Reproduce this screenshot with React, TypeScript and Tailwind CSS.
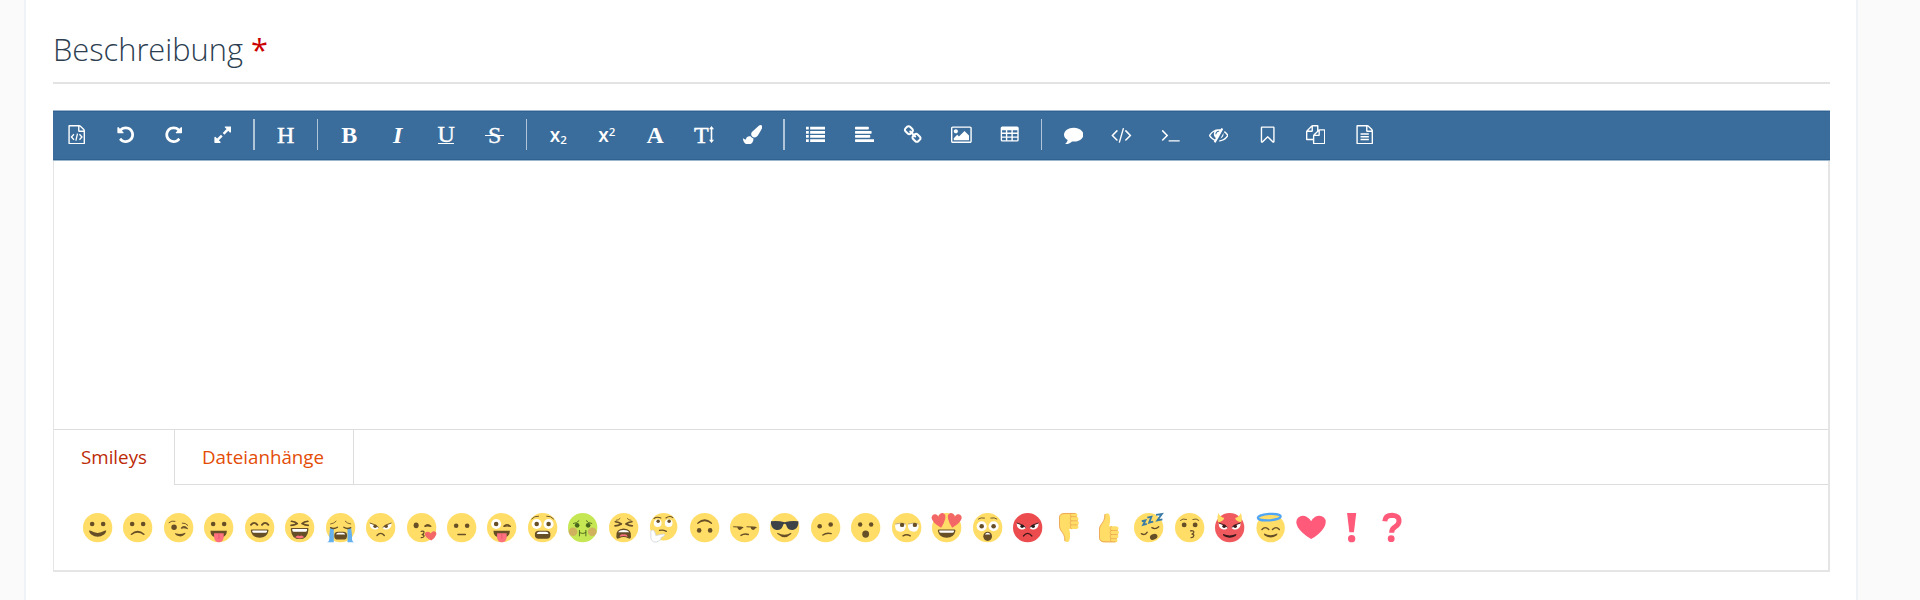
import type { ReactNode } from "react";

type IconProps = {
  d: string;
  viewBox?: string;
  className?: string;
};

// 1792 units = 1em of the toolbar icon font
const Icon = ({ d, viewBox = "0 0 1792 1792", className = "" }: IconProps) => (
  <svg viewBox={viewBox} fill="currentColor" className={`h-[19.4px] ${className}`}>
    <path d={d} />
  </svg>
);

const PAGE =
  "M1596 380q28 28 48 76t20 88v1152q0 40-28 68t-68 28h-1344q-40 0-68-28t-28-68v-1600q0-40 28-68t68-28h896q40 0 88 20t76 48zm-444-244v376h376q-10-29-22-41l-313-313q-12-12-41-22zm384 1528v-1024h-416q-40 0-68-28t-28-68v-416h-768v1536h1280z";
const UNDO =
  "M1664 896q0 156-61 298t-164 245-245 164-298 61q-172 0-327-72.5t-264-204.5q-7-10-6.5-22.5t8.5-20.5l137-138q10-9 25-9 16 2 23 12 73 95 179 147t225 52q104 0 198.5-40.5t163.5-109.5 109.5-163.5 40.5-198.5-40.5-198.5-109.5-163.5-163.5-109.5-198.5-40.5q-98 0-188 35.5t-160 101.5l137 138q31 30 14 69-17 40-59 40h-448q-26 0-45-19t-19-45v-448q0-42 40-59 39-17 69 14l130 129q107-101 244.5-156.5t284.5-55.5q156 0 298 61t245 164 164 245 61 298z";
const EXPAND =
  "M883 1056q0 13-10 23l-332 332 144 144q19 19 19 45t-19 45-45 19h-448q-26 0-45-19t-19-45v-448q0-26 19-45t45-19 45 19l144 144 332-332q10-10 23-10t23 10l114 114q10 10 10 23zm781-864v448q0 26-19 45t-45 19-45-19l-144-144-332 332q-10 10-23 10t-23-10l-114-114q-10-10-10-23t10-23l332-332-144-144q-19-19-19-45t19-45 45-19h448q26 0 45 19t19 45z";
const BRUSH =
  "M1615 0q70 0 122.5 46.5t52.5 116.5q0 63-45 151-332 629-465 752-97 91-218 91-126 0-216.5-92.5t-90.5-219.5q0-128 92-212l638-579q59-54 130-54zm-909 1034q39 76 106.5 130t150.5 76l1 71q4 213-129.5 347t-348.5 134q-123 0-218-46.5t-152.5-127.5-86.5-183-29-220q7 5 41 30t62 44.5 59 36.5 46 17q41 0 55-37 25-66 57.5-112.5t69.5-76 88-47.5 103-25.5 125-10.5z";
const LIST =
  "M0 160h256v256H0zM384 160h1408v256H384zM0 544h256v256H0zM384 544h1408v256H384zM0 928h256v256H0zM384 928h1408v256H384zM0 1312h256v256H0zM384 1312h1408v256H384z";
const ALIGN =
  "M64 160h1152q64 0 64 64v128q0 64-64 64H64q-64 0-64-64V224q0-64 64-64zM64 544h1408q64 0 64 64v128q0 64-64 64H64q-64 0-64-64V608q0-64 64-64zM64 928h1280q64 0 64 64v128q0 64-64 64H64q-64 0-64-64V992q0-64 64-64zM64 1312h1664q64 0 64 64v128q0 64-64 64H64q-64 0-64-64v-128q0-64 64-64z";
const LINK =
  "M1520 1216q0-40-28-68l-208-208q-28-28-68-28-42 0-72 32 3 3 19 18.5t21.5 21.5 15 19 13 25.5 3.5 27.5q0 40-28 68t-68 28q-15 0-27.5-3.5t-25.5-13-19-15-21.5-21.5-18.5-19q-33 31-33 73 0 40 28 68l206 207q27 27 68 27 40 0 68-26l147-146q28-28 28-67zm-703-705q0-40-28-68l-206-207q-28-28-68-28-39 0-68 27l-147 146q-28 28-28 67 0 40 28 68l208 208q27 27 68 27 42 0 72-31-3-3-19-18.5t-21.5-21.5-15-19-13-25.5-3.5-27.5q0-40 28-68t68-28q15 0 27.5 3.5t25.5 13 19 15 21.5 21.5 18.5 19q33-31 33-73zm895 705q0 120-85 203l-147 146q-83 83-203 83-121 0-204-85l-206-207q-83-83-83-203 0-123 88-209l-88-88q-86 88-208 88-120 0-204-84l-208-208q-84-84-84-204t85-203l147-146q83-83 203-83 121 0 204 85l206 207q83 83 83 203 0 123-88 209l88 88q86-88 208-88 120 0 204 84l208 208q84 84 84 204z";
const PICTURE =
  "M576 576q0 80-56 136t-136 56-136-56-56-136 56-136 136-56 136 56 56 136zm1024 384v448h-1408v-192l320-320 160 160 512-512zm96-704h-1600q-13 0-22.5 9.5t-9.5 22.5v1216q0 13 9.5 22.5t22.5 9.5h1600q13 0 22.5-9.5t9.5-22.5v-1216q0-13-9.5-22.5t-22.5-9.5zm160 32v1216q0 66-47 113t-113 47h-1600q-66 0-113-47t-47-113v-1216q0-66 47-113t113-47h1600q66 0 113 47t47 113z";
const TABLE =
  "M224 128h1344q160 0 160 160v1088q0 160-160 160H224q-160 0-160-160V288q0-160 160-160zM192 480v224h352V480zm480 0v224h384V480zm512 0v224h416V480zM192 832v224h352V832zm480 0v224h384V832zm512 0v224h416V832zM192 1184v224h352v-224zm480 0v224h384v-224zm512 0v224h416v-224z";
const COMMENT =
  "M1792 896q0 174-120 321.5t-326 233-450 85.5q-70 0-145-8-198 175-460 242-49 14-114 22-17 2-30.5-9t-17.5-29v-1q-3-4-.5-12t2-10 4.5-9.5l6-9 7-8.5 8-9q7-8 31-34.5t34.5-38 31-39.5 32.5-51 27-59 26-76q-157-89-247.5-220t-90.5-281q0-130 71-248.5t191-204.5 286-136.5 348-50.5q244 0 450 85.5t326 233 120 321.5z";
const CODE =
  "M681 1399l-50 50q-10 10-23 10t-23-10l-466-466q-10-10-10-23t10-23l466-466q10-10 23-10t23 10l50 50q10 10 10 23t-10 23l-393 393 393 393q10 10 10 23t-10 23zm591-1067l-373 1291q-4 13-15.5 19.5t-23.5 2.5l-62-17q-13-4-19.5-15.5t-2.5-24.5l373-1291q4-13 15.5-19.5t23.5-2.5l62 17q13 4 19.5 15.5t2.5 24.5zm657 651l-466 466q-10 10-23 10t-23-10l-50-50q-10-10-10-23t10-23l393-393-393-393q-10-10-10-23t10-23l50-50q10-10 23-10t23 10l466 466q10 10 10 23t-10 23z";
const TERMINAL =
  "M649 983l-466 466q-10 10-23 10t-23-10l-50-50q-10-10-10-23t10-23l393-393-393-393q-10-10-10-23t10-23l50-50q10-10 23-10t23 10l466 466q10 10 10 23t-10 23zm1079 457v64q0 14-9 23t-23 9h-960q-14 0-23-9t-9-23v-64q0-14 9-23t23-9h960q14 0 23 9t9 23z";
const EYE_SLASH =
  "M555 1335l78-141q-87-63-136-159t-49-203q0-121 61-225-229 117-381 353 167 258 427 375zm389-759q0-20-14-34t-34-14q-125 0-214.5 89.5t-89.5 214.5q0 20 14 34t34 14 34-14 14-34q0-86 61-147t147-61q20 0 34-14t14-34zm363-191q0 7-1 9-106 189-316 567t-315 566l-49 89q-10 16-28 16-12 0-134-70-16-10-16-28 0-12 44-87-143-65-263.5-173t-208.5-245q-20-31-20-69t20-69q153-235 380-371t496-136q89 0 180 17l54-97q10-16 28-16 5 0 18 6t31 15.5 33 18.5 31.5 18.5 19.5 11.5q16 10 16 27zm37 447q0 139-79 253.5t-209 164.5l280-502q8 45 8 84zm448 128q0 35-20 69-39 64-109 145-150 172-347.5 267t-419.5 95l74-132q212-18 392.5-137t301.5-307q-115-179-282-294l63-112q95 64 182.5 153t144.5 184q20 34 20 69z";
const BOOKMARK =
  "M1408 256h-1024v1242l423-406 89-85 89 85 423 406v-1242zm12-128q23 0 44 9 33 13 52.5 41t19.5 62v1289q0 34-19.5 62t-52.5 41q-19 8-44 8-48 0-83-32l-441-424-441 424q-36 33-83 33-23 0-44-9-33-13-52.5-41t-19.5-62v-1289q0-34 19.5-62t52.5-41q21-9 44-9h1048z";
const COPY =
  "M1696 384q40 0 68 28t28 68v1216q0 40-28 68t-68 28h-960q-40 0-68-28t-28-68v-288h-544q-40 0-68-28t-28-68v-672q0-40 20-88t48-76l408-408q28-28 76-48t88-20h416q40 0 68 28t28 68v328q68-40 128-40h416zm-544 213l-299 299h299v-299zm-640-384l-299 299h299v-299zm196 647l316-316v-416h-384v416q0 40-28 68t-68 28h-416v640h512v-256q0-40 20-88t48-76zm956 804v-1152h-384v416q0 40-28 68t-68 28h-416v640h896z";

const Letter = ({ children, className = "" }: { children: ReactNode; className?: string }) => (
  <span className={`font-['Liberation_Serif',serif] text-[24px] leading-none ${className}`}>{children}</span>
);

const toolbar: { title: string; icon: ReactNode }[][] = [
  [
    {
      title: "Quelltext",
      icon: (
        <svg viewBox="0 0 1792 1792" fill="currentColor" className="h-[19.4px]">
          <path d={PAGE} />
          <path
            d="M640 860L410 1110l230 250M1152 860l230 250-230 250M970 800L822 1440"
            fill="none"
            stroke="currentColor"
            strokeWidth="120"
          />
        </svg>
      ),
    },
    { title: "Rückgängig", icon: <Icon d={UNDO} /> },
    { title: "Wiederholen", icon: <Icon d={UNDO} className="-scale-x-100" /> },
    { title: "Vollbild", icon: <Icon d={EXPAND} /> },
  ],
  [{ title: "Überschrift", icon: <Letter className="[-webkit-text-stroke:0.5px_white]">H</Letter> }],
  [
    { title: "Fett", icon: <Letter className="font-bold">B</Letter> },
    { title: "Kursiv", icon: <Letter className="font-bold italic">I</Letter> },
    {
      title: "Unterstrichen",
      icon: (
        <span className="flex h-[18px] w-4 items-center justify-center border-b-[1.5px] border-white">
          <Letter className="text-[21px] [-webkit-text-stroke:0.4px_white]">U</Letter>
        </span>
      ),
    },
    {
      title: "Durchgestrichen",
      icon: (
        <span className="relative flex w-[19px] justify-center">
          <Letter className="[-webkit-text-stroke:0.3px_white]">S</Letter>
          <span className="absolute inset-x-0 top-[12px] h-[1.5px] bg-white" />
        </span>
      ),
    },
  ],
  [
    {
      title: "Tiefgestellt",
      icon: (
        <span className="flex items-end text-[19px] font-semibold leading-5">
          x<span className="-mb-[5px] text-[11.5px]">2</span>
        </span>
      ),
    },
    {
      title: "Hochgestellt",
      icon: (
        <span className="flex items-start text-[19px] font-semibold leading-5">
          x<span className="-mt-[3px] text-[11.5px]">2</span>
        </span>
      ),
    },
    { title: "Schriftfarbe", icon: <Letter className="font-bold">A</Letter> },
    {
      title: "Schriftgröße",
      icon: (
        <span className="flex items-center">
          <Letter className="[-webkit-text-stroke:0.5px_white]">T</Letter>
          <svg viewBox="0 0 5 17" fill="currentColor" className="h-[17px] w-[5px]">
            <path d="M2.5 0L5 3.2H3.3v10.6H5L2.5 17 0 13.8h1.7V3.2H0z" />
          </svg>
        </span>
      ),
    },
    { title: "Hervorheben", icon: <Icon d={BRUSH} /> },
  ],
  [
    { title: "Liste", icon: <Icon d={LIST} /> },
    { title: "Ausrichtung", icon: <Icon d={ALIGN} /> },
    { title: "Link", icon: <Icon d={LINK} /> },
    { title: "Bild", icon: <Icon d={PICTURE} viewBox="-64 0 1920 1792" /> },
    { title: "Tabelle", icon: <Icon d={TABLE} /> },
  ],
  [
    { title: "Zitat", icon: <Icon d={COMMENT} /> },
    { title: "Code", icon: <Icon d={CODE} viewBox="64 0 1920 1792" /> },
    { title: "Konsole", icon: <Icon d={TERMINAL} /> },
    { title: "Spoiler", icon: <Icon d={EYE_SLASH} /> },
    { title: "Lesezeichen", icon: <Icon d={BOOKMARK} /> },
    { title: "Kopieren", icon: <Icon d={COPY} /> },
    {
      title: "Vorlage",
      icon: <Icon d={PAGE + "M512 768h768v128H512zM512 1024h768v128H512zM512 1280h768v128H512z"} />,
    },
  ],
];

const INK = "#664e27";

const Face = ({ color = "#ffdd67" }: { color?: string }) => <circle cx="32" cy="32" r="32" fill={color} />;

const Dots = ({ y = 24, r = 5, fill = INK, x1 = 20, x2 = 44 }: { y?: number; r?: number; fill?: string; x1?: number; x2?: number }) => (
  <g fill={fill}>
    <circle cx={x1} cy={y} r={r} />
    <circle cx={x2} cy={y} r={r} />
  </g>
);

const Line = ({ d, w = 3, color = INK }: { d: string; w?: number; color?: string }) => (
  <path d={d} fill="none" stroke={color} strokeWidth={w} strokeLinecap="round" strokeLinejoin="round" />
);

const WideEyes = ({ y = 24, x1 = 19, x2 = 45 }: { y?: number; x1?: number; x2?: number }) => (
  <>
    <Dots x1={x1} x2={x2} y={y} r={11} fill="#fff" />
    <Dots x1={x1} x2={x2} y={y} r={5} />
  </>
);

const AngryEyes = ({ pupil = INK }: { pupil?: string }) => (
  <>
    <path d="M8 22Q8 35 18 36Q27 36 28 31zM56 22Q56 35 46 36Q37 36 36 31z" fill="#fff" />
    <Dots x1={20} x2={44} y={29} r={4} fill={pupil} />
    <Line d="M9 22Q19 24 27 31M55 22Q45 24 37 31" w={2} color={pupil} />
  </>
);

const Squeezed = ({ y = 0 }: { y?: number }) => (
  <g transform={`translate(0 ${y})`}>
    <Line d="M14 18Q22 19 27 23Q20 27 13 27M50 18Q42 19 37 23Q44 27 51 27" w={3.6} />
  </g>
);

const TongueMouth = () => (
  <>
    <path d="M14 39H50Q50 54 32 55Q14 54 14 39z" fill={INK} />
    <path d="M22 44H43V53Q42 64 32.5 64Q23 64 22 53z" fill="#ff717f" />
    <path d="M32.5 45V57" stroke="#e2596c" strokeWidth="2" />
  </>
);

const GrinMouth = ({ y = 0 }: { y?: number }) => (
  <g transform={`translate(0 ${y})`}>
    <path d="M15 36H49Q52 36 51 40Q48 54 32 54Q16 54 13 40Q12 36 15 36z" fill={INK} />
    <path d="M17 38H47Q49 38 48 41Q47 43 45 43H19Q17 43 16 41Q15 38 17 38z" fill="#fff" />
  </g>
);

const Hand = () => (
  <>
    <path
      d="M26 2C21 3 24 10 22 15C20 21 12 27 12 34V56C12 62 18 64 24 64H46C53 64 52 57 49 56C55 55 54 48 51 47C56 45 55 38 51 38C55 36 54 29 48 29H33C36 21 36 9 33 3Q30 -1 26 2z"
      fill="#ffdd67"
    />
    <Line d="M24 3Q24 12 21 17C18 23 12 28 12 35V55Q13 63 24 63H46" w={2} color="#eba352" />
    <Line d="M37 38H51M37 47H51M37 56H49M38 29Q33 34 37 38Q33 43 37 47Q34 52 37 56Q34 60 38 63" w={1.6} color="#eba352" />
  </>
);

const smileys: ReactNode[] = [
  // smile
  <>
    <Face />
    <Dots />
    <path d="M13 39Q14 37 17 39Q32 48 47 39Q50 37 51 39Q50 44 46 47Q32 57 18 47Q14 44 13 39z" fill={INK} />
  </>,
  // frown
  <>
    <Face />
    <Dots />
    <path d="M17 46Q32 32 47 46Q48 49 45 48Q32 38 19 48Q16 49 17 46z" fill={INK} />
  </>,
  // wink
  <>
    <Face />
    <circle cx="22" cy="31" r="6" fill={INK} />
    <Line d="M11 21Q17 16 24 18M40 22Q47 21 52 27" w={2} />
    <Line d="M38 33Q43 26 51 34Q44 31 38 33" w={2.5} />
    <path d="M25 44Q35 48 46 43Q48 43 46 46Q41 52 34 51Q27 50 24 46Q23 44 25 44z" fill={INK} />
  </>,
  // tongue
  <>
    <Face />
    <Dots />
    <TongueMouth />
  </>,
  // grin
  <>
    <Face />
    <Line d="M13 26Q20 17 27 26M37 26Q44 17 51 26" w={4} />
    <GrinMouth />
  </>,
  // laughing
  <>
    <Face />
    <Squeezed />
    <path d="M14 33H50Q52 33 51 38Q49 57 32 57Q15 57 13 38Q12 33 14 33z" fill={INK} />
    <path d="M16 35H48V39Q47 41 45 41H19Q17 41 16 39z" fill="#fff" />
    <path d="M22 53Q27 47 32 50Q37 47 42 53Q32 58 22 53z" fill="#ff717f" />
  </>,
  // crying
  <>
    <Face />
    <Line d="M10 24Q18 23 22 18M54 24Q46 23 42 18" w={1.8} />
    <path d="M9 33H17V64H2Q9 62 7 50zM55 33H47V64H62Q55 62 57 50z" fill="#65b1ef" />
    <Line d="M10 32Q18 36 25 31M54 32Q46 36 39 31" w={3} />
    <rect x="18" y="41" width="28" height="17" rx="8" fill={INK} />
    <path d="M22 47Q23 43 27 43H37Q41 43 42 47z" fill="#fff" />
  </>,
  // angry
  <>
    <Face />
    <AngryEyes />
    <Line d="M24 49Q32 40 40 49" w={3} />
  </>,
  // kissing heart
  <>
    <Face />
    <ellipse cx="20" cy="27" rx="5.5" ry="6.5" fill={INK} />
    <Line d="M39 29Q45 22 52 29Q45 27 39 29" w={3} />
    <Line d="M31 40Q38 39 37 43Q36 46 33 47Q38 48 37 51Q36 54 31 54" w={2.8} />
    <path d="M53 60Q40 54 39 47Q39 41 45 41Q50 41 52 45Q54 40 59 40Q65 41 64 47Q62 54 53 60z" fill="#f46767" />
  </>,
  // neutral
  <>
    <Face />
    <Dots y={28} />
    <Line d="M24 47H40" w={3.2} />
  </>,
  // zany
  <>
    <Face />
    <circle cx="20" cy="24" r="11" fill="#fff" />
    <circle cx="20" cy="24" r="5" fill={INK} />
    <Line d="M37 29Q43 22 51 29Q44 27 37 29" w={3} />
    <TongueMouth />
  </>,
  // fearful
  <>
    <Face />
    <Line d="M8 13Q14 6 23 7M56 13Q50 6 41 7" w={2} />
    <WideEyes />
    <rect x="15" y="39" width="34" height="17" rx="8" fill={INK} />
    <path d="M19 46Q20 41 25 41H39Q44 41 45 46z" fill="#fff" />
  </>,
  // nauseated
  <>
    <Face color="#c6e754" />
    <circle cx="11" cy="41" r="9.5" fill="#d1a75f" opacity="0.85" />
    <circle cx="53" cy="41" r="9.5" fill="#d1a75f" opacity="0.85" />
    <Dots y={27} fill="#46651d" />
    <Line d="M12 23Q20 22 24 17M52 23Q44 22 40 17" w={2} color="#46651d" />
    <Line d="M25 38V50M39 38V50M25 43Q32 47 39 43" w={2} color="#46651d" />
  </>,
  // tired
  <>
    <Face />
    <Line d="M16 16Q21 16 24 12M48 16Q43 16 40 12" w={1.8} />
    <Squeezed y={1} />
    <path d="M16 52Q14 35 32 34Q50 35 48 52Q48 58 42 55Q32 50 22 55Q16 58 16 52z" fill={INK} />
    <path d="M20 42Q23 37 32 37Q41 37 44 42z" fill="#fff" />
    <path d="M23 52Q25 45 32 47Q39 45 41 52Q32 48 23 52z" fill="#ff717f" />
  </>,
  // thinking
  <>
    <circle cx="32" cy="30" r="30" fill="#ffdd67" />
    <Line d="M11 12Q17 7 26 11M37 11Q45 5 52 10" w={2.3} />
    <circle cx="19" cy="22" r="8.5" fill="#fff" />
    <circle cx="43" cy="22" r="8.5" fill="#fff" />
    <circle cx="20" cy="18" r="3.8" fill={INK} />
    <circle cx="44" cy="18" r="3.8" fill={INK} />
    <Line d="M23 38Q30 36 38 40" w={3} />
    <path
      d="M7 37Q3 38 4 48Q3 60 10 63Q17 65 23 60Q28 57 26 54L33 50Q36 46 32 46L15 49Q13 37 7 37z"
      fill="#fff"
      stroke="#cfd4d9"
      strokeWidth="1.8"
    />
  </>,
  // upside down
  <>
    <Face />
    <Dots y={38} />
    <path d="M17 24Q14 25 17 20Q32 7 47 20Q50 25 47 24Q32 12 17 24z" fill={INK} />
  </>,
  // unamused
  <>
    <Face />
    <Line d="M8 30Q18 30 28 32M37 30Q47 30 57 32" w={2.4} />
    <path d="M16 30H27Q26 37 21 37Q16 36 16 30zM45 30H56Q55 37 50 37Q45 36 45 30z" fill={INK} />
    <Line d="M24 49Q31 44 40 47" w={3} />
  </>,
  // sunglasses
  <>
    <Face />
    <path d="M2 18Q17 16 32 20Q47 16 62 18V23Q60 36 50 37Q38 38 35 25Q32 22 29 25Q26 38 14 37Q4 36 2 23z" fill="#3e4347" />
    <path d="M16 43Q32 52 46 43Q48 44 45 47Q38 53 32 53Q25 53 18 47Q14 44 16 43z" fill={INK} />
  </>,
  // confused
  <>
    <Face />
    <circle cx="19" cy="29" r="5" fill={INK} />
    <circle cx="43" cy="25" r="5" fill={INK} />
    <Line d="M26 48Q34 42 44 45" w={3.2} />
  </>,
  // hushed
  <>
    <Face />
    <Dots y={25} r={4.8} />
    <ellipse cx="32" cy="46" rx="7.5" ry="8" fill={INK} />
  </>,
  // rolling eyes
  <>
    <Face />
    <path d="M7 24Q19 20 30 24V31Q28 41 18 41Q8 40 7 31zM35 24Q47 20 58 24V31Q56 41 47 41Q37 40 35 31z" fill="#fff" />
    <circle cx="22" cy="26" r="4.8" fill={INK} />
    <circle cx="50" cy="26" r="4.8" fill={INK} />
    <Line d="M8 24Q19 20 29 24M36 24Q47 20 57 24" w={1} />
    <Line d="M24 50Q32 45 40 50" w={3} />
  </>,
  // heart eyes
  <>
    <Face />
    <path d="M20 32Q1 22 -1 11Q0 2 8 3Q12 4 14 8Q16 0 23 0Q31 2 29 12Q27 22 20 32z" fill="#f46767" />
    <path d="M44 32Q63 22 65 11Q64 2 56 3Q52 4 50 8Q48 0 41 0Q33 2 35 12Q37 22 44 32z" fill="#f46767" />
    <GrinMouth />
  </>,
  // astonished
  <>
    <Face />
    <Line d="M12 13Q17 9 25 11M52 13Q47 9 39 11" w={2} />
    <WideEyes y={29} />
    <ellipse cx="32" cy="51" rx="9.5" ry="10" fill={INK} />
    <path d="M26 47Q28 43 32 43Q36 43 38 47z" fill="#fff" />
  </>,
  // rage
  <>
    <Face color="#ed4c4f" />
    <AngryEyes pupil="#2b1a1b" />
    <Line d="M23 50Q32 39 41 50" w={3.2} color="#3a1818" />
  </>,
  // thumbs down
  <g transform="translate(0 64) scale(1 -1)">
    <Hand />
  </g>,
  // thumbs up
  <Hand />,
  // sleeping
  <>
    <Face />
    <Line d="M16 45Q24 50 29 42M39 32Q47 37 54 30" w={3} />
    <ellipse cx="43" cy="52" rx="8.5" ry="6" fill={INK} transform="rotate(-24 43 52)" />
    <path
      d="M17 18L25 16L20 26L28 24M29 10L38 8L33 21L42 19M48 4L61 2L51 16L62 14"
      fill="none"
      stroke="#3a7ba6"
      strokeWidth="4"
    />
  </>,
  // kissing
  <>
    <Face />
    <Dots y={26} r={5.3} />
    <Line d="M12 16Q17 11 25 14M39 14Q47 11 52 16" w={2} />
    <Line d="M34 39Q42 38 41 42Q40 45 37 46Q42 47 41 50Q40 54 35 54" w={2.8} />
  </>,
  // devil
  <>
    <Face color="#f05a5f" />
    <path d="M7 20Q3 9 8 0Q10 8 20 11Q18 19 7 20zM57 20Q61 9 56 0Q54 8 44 11Q46 19 57 20z" fill="#ffdd67" />
    <AngryEyes pupil="#3a1a1c" />
    <path d="M18 46Q32 52 46 46Q48 47 45 50Q32 58 19 50Q16 47 18 46z" fill="#3a1a1c" />
  </>,
  // angel
  <>
    <circle cx="32" cy="33" r="31" fill="#ffdd67" />
    <ellipse cx="29" cy="9" rx="25" ry="7" fill="#ffdd67" stroke="#50a5f5" strokeWidth="5" transform="rotate(-4 29 9)" />
    <Line d="M13 36Q20 28 28 36M36 36Q44 28 51 36" w={3} />
    <path d="M18 45Q32 52 46 45Q48 46 45 49Q32 58 19 49Q16 46 18 45z" fill={INK} />
  </>,
  // heart
  <path d="M33 57Q13 45 4 31Q-3 18 5 10Q13 3 23 8Q30 12 33 18Q36 12 42 8Q53 3 61 10Q69 18 61 32Q52 46 33 57z" fill="#ff5a79" />,
  // exclamation
  <g fill="#ff5a79">
    <path d="M22 0H42L37 42H27z" />
    <circle cx="32" cy="56" r="8" />
  </g>,
  // question
  <g fill="#ff5a79">
    <path d="M17 18Q18 5 33 5Q49 6 48 18Q48 25 40 30Q32 34 32 43" fill="none" stroke="#ff5a79" strokeWidth="11" />
    <circle cx="31" cy="56" r="7.5" />
  </g>,
];

const Toolbar = () => (
  <div className="box-border flex h-[51px] items-center border-y border-[#9cb6ce] bg-[#3a6d9c] pb-[1.5px] text-white shadow-[inset_0_1px_#2f6292,inset_0_-1px_#2f6292]">
    {toolbar.map((group, i) => (
      <div key={i} className="flex items-center first:-ml-[0.5px]">
        {i > 0 && <span className="mx-[6.75px] h-[31px] w-[1.5px] bg-[#b1c5d8]" />}
        {group.map(({ title, icon }) => (
          <button key={title} aria-label={title} className="flex h-[31px] w-[48.5px] items-center justify-center">
            {icon}
          </button>
        ))}
      </div>
    ))}
  </div>
);

const App = () => {
  return (
    <div className="h-[600px] overflow-hidden bg-[#fafafa] pl-[24px] pr-[62px] font-['Open_Sans',sans-serif]">
      <div className="h-full border-x-2 border-[#eff3f8] bg-white pl-[27px] pr-[26px]">
        <h2 className="h-[84px] border-b-2 border-[#e3e3e3] pt-[27px] text-[30.8px] font-light leading-[44px] text-[#2c3e50]">
          Beschreibung <span className="font-normal text-[#cc0000]">*</span>
        </h2>

        <div className="mt-[26px]">
          <Toolbar />
          <div className="h-[411px] border-b-2 border-l border-r-2 border-[#e5e5e5]">
            <div className="h-[268px]" />
            <div className="flex h-[56px] border-t border-[#dddddd] text-[18.75px] leading-[54px]">
              <div className="w-[120px] pl-[27px] text-[#bc2a05]">Smileys</div>
              <div className="w-[180px] border-x border-b border-[#dddddd] pl-[27px] text-[#e44c06]">Dateianhänge</div>
              <div className="flex-1 border-b border-[#dddddd]" />
            </div>
            <div className="flex gap-[11.15px] pl-[29px] pt-[28px]">
              {smileys.map((smiley, i) => (
                <svg key={i} viewBox="0 0 64 64" className="h-[29.3px] w-[29.3px] shrink-0 overflow-visible">
                  {smiley}
                </svg>
              ))}
            </div>
          </div>
        </div>
      </div>
    </div>
  );
};

export default App;
